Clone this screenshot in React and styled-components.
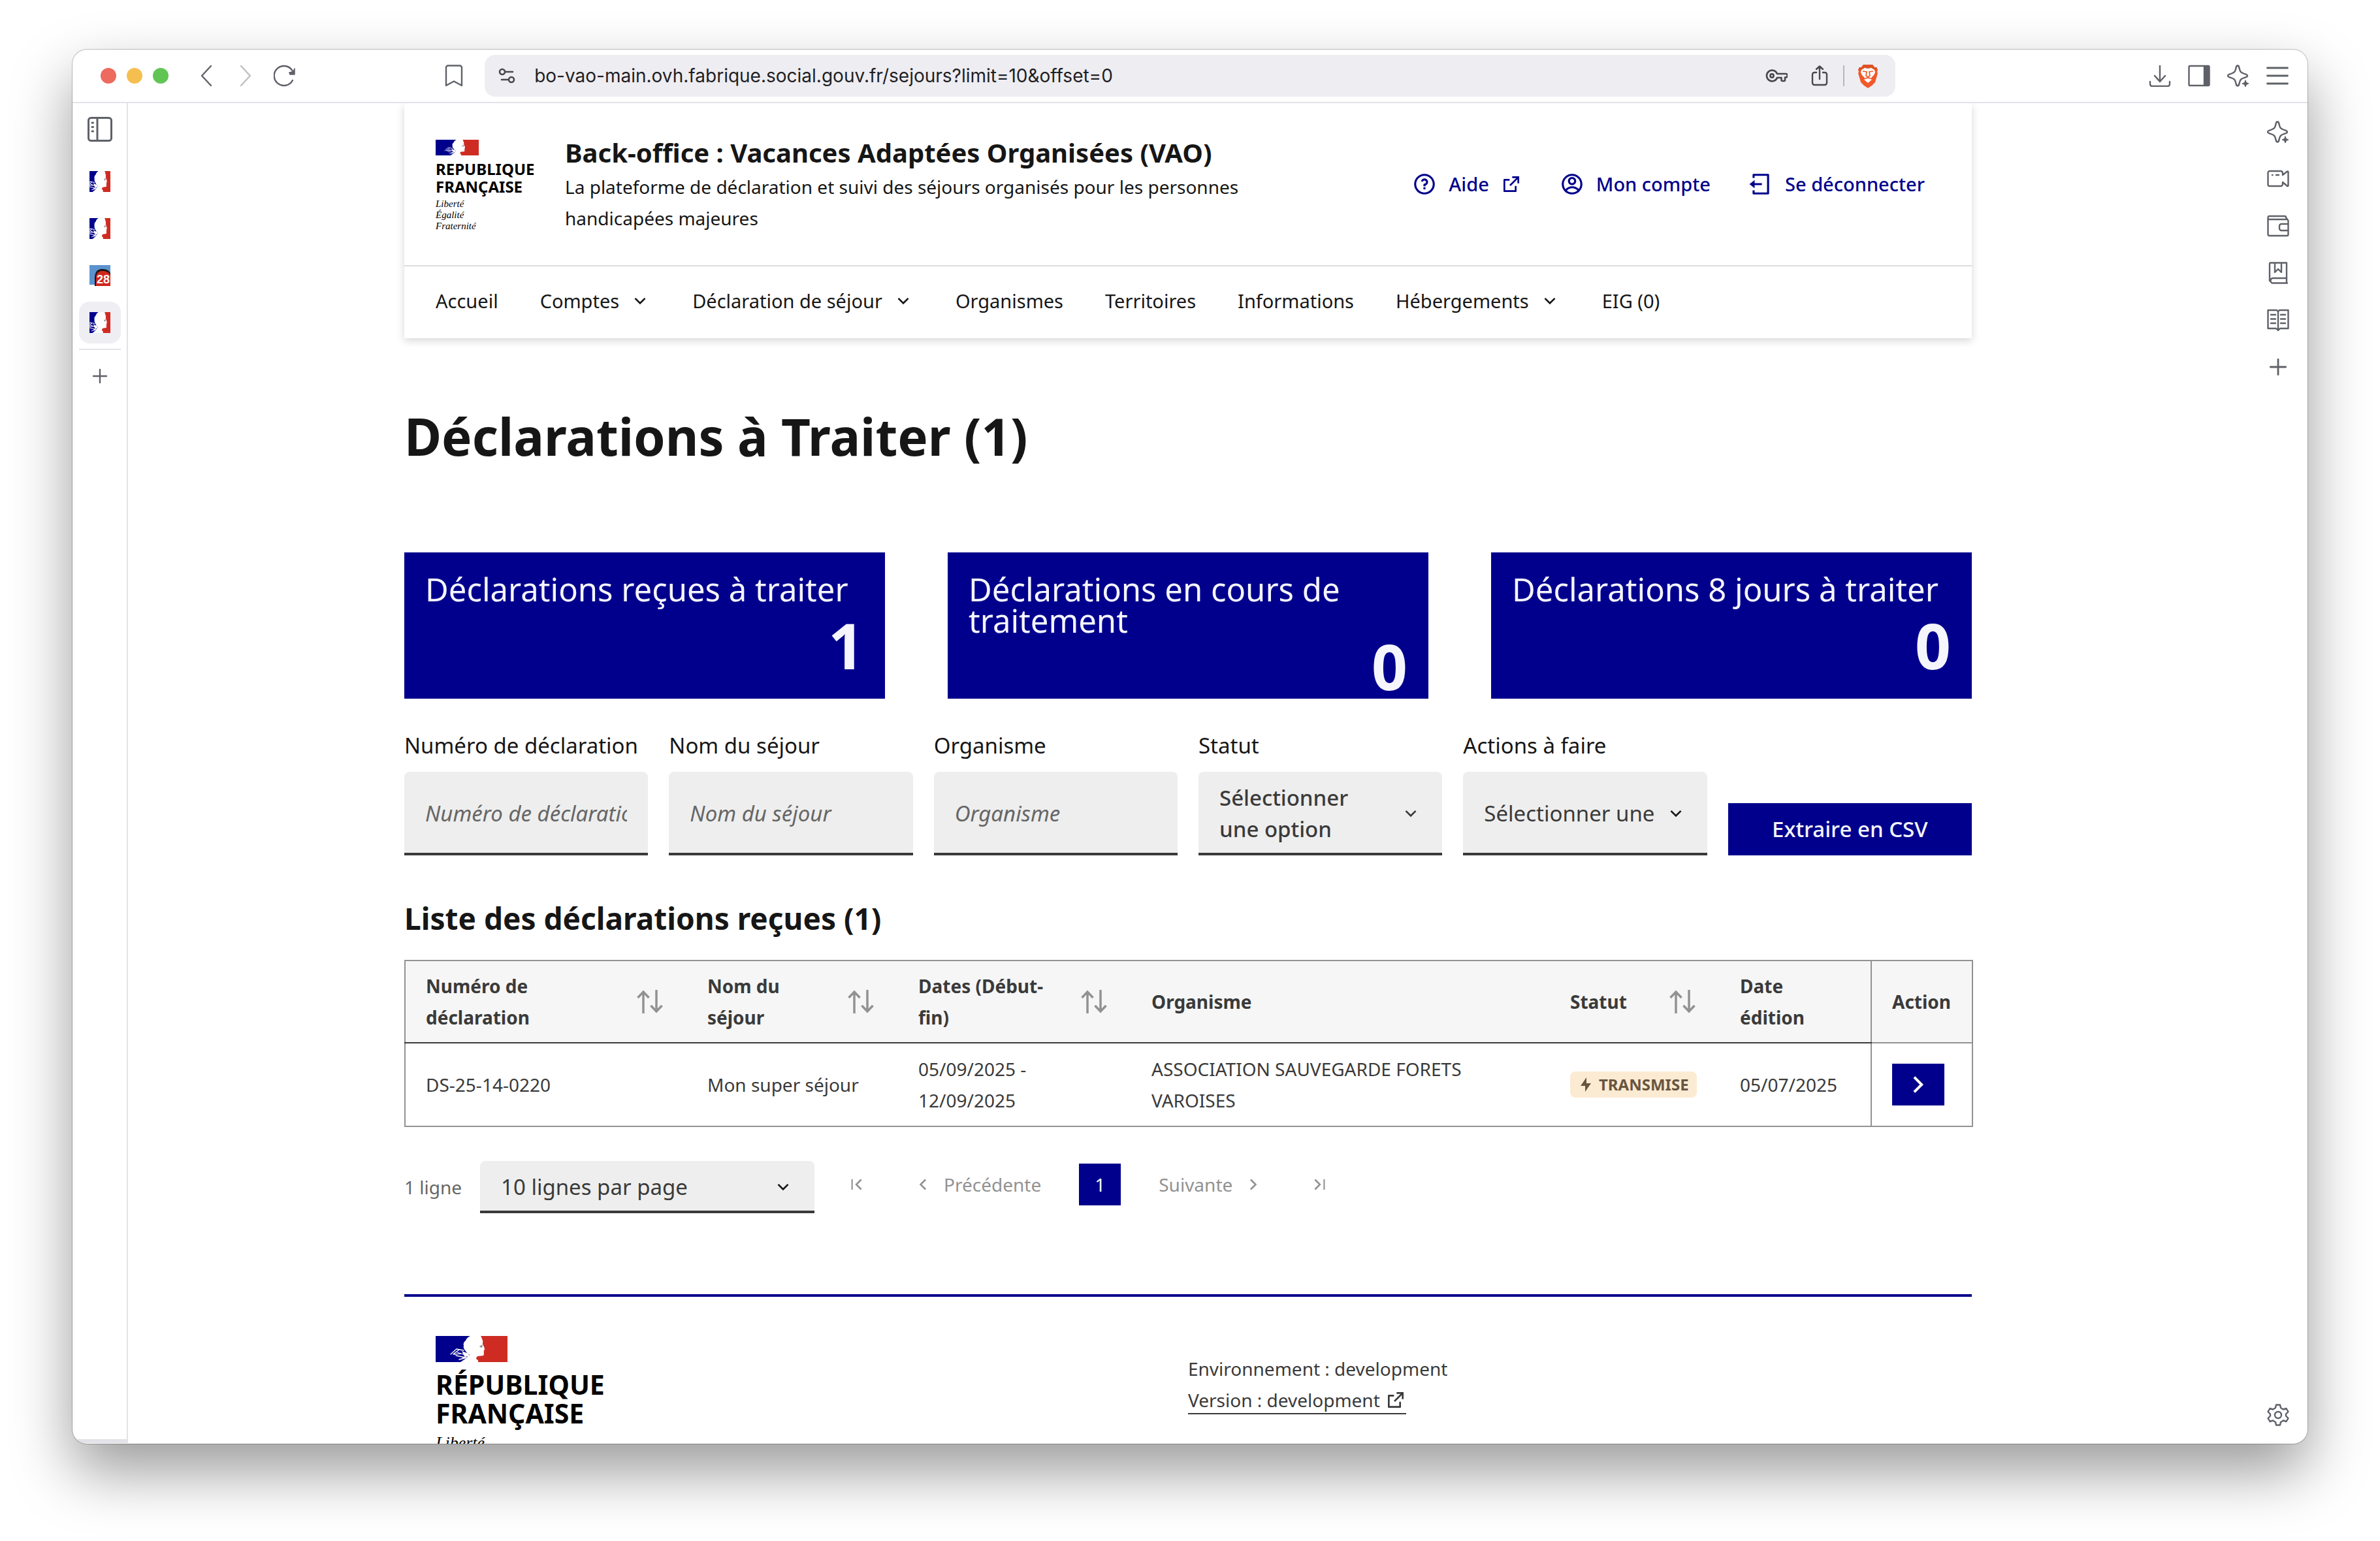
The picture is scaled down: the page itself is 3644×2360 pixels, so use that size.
import React from "react";
import styled, { createGlobalStyle, css } from "styled-components";
import {
  RiAccountCircleLine,
  RiArrowDownSLine,
  RiArrowLeftSLine,
  RiArrowRightSLine,
  RiExternalLinkLine,
  RiFlashlightFill,
  RiLogoutBoxLine,
  RiQuestionLine,
} from "react-icons/ri";

const BLUE = "#00008c";
const RED = "#ce2c23";
const TITLE = "#161616";
const TEXT = "#3a3a3a";
const MENTION = "#666666";
const DISABLED = "#929292";
const CHROME = "#5f6168";
const CHROME_LINE = "#e2e2e8";

const GlobalStyle = createGlobalStyle`
  *, *::before, *::after { box-sizing: border-box; }
  html, body, #root { height: 100%; }
  body {
    margin: 0;
    background: #ffffff;
    color: ${TEXT};
    font-family: "Noto Sans", "Open Sans", sans-serif;
    font-size: 28px;
    line-height: 48px;
  }
  button, input, select { font: inherit; color: inherit; margin: 0; }
  button { border: 0; padding: 0; background: none; cursor: pointer; }
  a { color: inherit; text-decoration: none; }
  h1, h2, p, ul { margin: 0; padding: 0; }
  ul { list-style: none; }
  svg { display: block; flex: none; }
`;

/* ---------- Browser window ---------- */

const Desktop = styled.div`
  height: 100%;
  min-height: 900px;
  padding: 76px 111px 149px;
  display: flex;
`;

const BrowserWindow = styled.div`
  flex: 1;
  min-width: 0;
  display: flex;
  flex-direction: column;
  overflow: hidden;
  border-radius: 22px;
  background: #ffffff;
  box-shadow: 0 0 0 1px rgba(0, 0, 0, 0.22), 0 42px 92px rgba(0, 0, 0, 0.4);
`;

const Toolbar = styled.div`
  flex: none;
  height: 82px;
  padding: 0 26px 0 43px;
  display: grid;
  grid-template-columns: 13fr 2224px 15fr;
  align-items: center;
  border-bottom: 2px solid ${CHROME_LINE};
  color: ${CHROME};

  @media (max-width: 3200px) {
    grid-template-columns: auto 1fr auto;
    gap: 32px;
  }
`;

const ToolbarGroup = styled.div`
  display: flex;
  align-items: center;
  gap: ${(p) => p.$gap}px;
  justify-content: ${(p) => (p.$end ? "flex-end" : "flex-start")};
`;

const Lights = styled.div`
  display: flex;
  gap: 16px;
  margin-right: 18px;
`;

const Light = styled.span`
  width: 24px;
  height: 24px;
  border-radius: 50%;
  background: ${(p) => p.$color};
`;

const ChromeButton = styled.button`
  width: ${(p) => p.$width || 40}px;
  height: 40px;
  display: flex;
  align-items: center;
  justify-content: center;
  opacity: ${(p) => (p.$faded ? 0.4 : 1)};
`;

const AddressRow = styled.div`
  display: flex;
  align-items: center;
  gap: 30px;
`;

const AddressBar = styled.div`
  flex: 1;
  height: 64px;
  padding: 0 22px 0 14px;
  display: flex;
  align-items: center;
  gap: 16px;
  border-radius: 16px;
  background: #eeedf2;
  color: #47474d;
`;

const AddressInput = styled.input`
  flex: 1;
  min-width: 0;
  border: 0;
  padding: 0 0 0 6px;
  background: transparent;
  color: #1f1f24;
  font-family: Inter, "Liberation Sans", sans-serif;
  font-size: 28px;
  line-height: 40px;
`;

const AddressSeparator = styled.span`
  width: 2px;
  height: 32px;
  background: #b6b5bc;
`;

const WindowBody = styled.div`
  flex: 1;
  min-height: 0;
  display: flex;
`;

const TabRail = styled.div`
  flex: none;
  width: 85px;
  margin-bottom: 1px;
  padding-top: 16px;
  display: flex;
  flex-direction: column;
  align-items: center;
  border-right: 2px solid ${CHROME_LINE};
  border-bottom: 6px solid ${CHROME_LINE};
  color: ${CHROME};
`;

const TabButton = styled.button`
  width: 64px;
  height: 64px;
  margin-bottom: 8px;
  display: flex;
  align-items: center;
  justify-content: center;
  border-radius: 16px;
  background: ${(p) => (p.$active ? "#efeef3" : "transparent")};
`;

const RailToggle = styled(TabButton)`
  height: 48px;
  margin-bottom: 24px;
`;

const RailDivider = styled.hr`
  width: 64px;
  height: 2px;
  margin: 0 0 8px;
  border: 0;
  background: ${CHROME_LINE};
`;

const ToolRail = styled.div`
  flex: none;
  width: 91px;
  padding: 8px 0 8px;
  display: flex;
  flex-direction: column;
  align-items: center;
  color: ${CHROME};
`;

const RailButton = styled.button`
  width: 72px;
  height: 72px;
  display: flex;
  align-items: center;
  justify-content: center;

  &:last-child {
    margin-top: auto;
  }
`;

/* ---------- Page ---------- */

const Viewport = styled.main`
  flex: 1;
  min-width: 0;
  overflow: hidden;
`;

const Page = styled.div`
  max-width: 2400px;
  margin: 0 auto;
`;

const Header = styled.header`
  background: #ffffff;
  box-shadow: 0 4px 12px rgba(0, 0, 0, 0.16);
  color: ${TITLE};
`;

const HeaderBody = styled.div`
  min-height: 248px;
  padding: 40px 72px 40px 48px;
  display: flex;
  align-items: center;
`;

const Brand = styled.div`
  flex: none;
  width: 198px;
  padding-top: 4px;
`;

const Flag = styled.svg`
  width: ${(p) => p.$width}px;
  height: ${(p) => p.$height}px;
`;

const BrandName = styled.p`
  margin-top: ${(p) => (p.$large ? 12 : 7)}px;
  color: #000000;
  font-size: ${(p) => (p.$large ? 41 : 24)}px;
  line-height: ${(p) => (p.$large ? 44 : 27)}px;
  font-weight: 700;
`;

const BrandMotto = styled.p`
  margin-top: ${(p) => (p.$large ? 10 : 5)}px;
  color: #000000;
  font-family: "Liberation Serif", serif;
  font-style: italic;
  font-size: ${(p) => (p.$large ? 26 : 15)}px;
  line-height: ${(p) => (p.$large ? 28 : 17)}px;
`;

const Service = styled.div`
  flex: 0 1 1120px;
`;

const ServiceTitle = styled.p`
  font-size: 40px;
  line-height: 56px;
  font-weight: 700;
`;

const QuickLinks = styled.ul`
  margin-left: auto;
  display: flex;
  align-items: center;
  gap: 58px;
`;

const QuickLink = styled.a`
  display: flex;
  align-items: center;
  gap: 18px;
  color: ${BLUE};
  font-size: 29px;
  font-weight: 500;
  white-space: nowrap;
`;

const Nav = styled.nav`
  border-top: 2px solid #dddddd;
`;

const NavList = styled.ul`
  padding: 0 16px;
  display: flex;
`;

const navItem = css`
  height: 110px;
  padding: 0 32px 4px;
  display: flex;
  align-items: center;
  gap: 16px;
  font-size: 29px;
  white-space: nowrap;
`;

const NavLink = styled.a`
  ${navItem}
`;

const NavButton = styled.button`
  ${navItem}
`;

const PageTitle = styled.h1`
  margin: 102px 0 130px;
  color: ${TITLE};
  font-size: 78px;
  line-height: 96px;
  font-weight: 700;
`;

const Tiles = styled.div`
  display: grid;
  grid-template-columns: repeat(3, 1fr);
  gap: 96px;
`;

const Tile = styled.button`
  height: 224px;
  padding: 32px;
  display: flex;
  flex-direction: column;
  background: ${BLUE};
  color: #f5f5fe;
  text-align: left;
`;

const TileLabel = styled.span`
  flex: none;
  min-height: 64px;
  margin-bottom: -18px;
  font-size: 49px;
  line-height: 48px;
  font-weight: 400;
`;

const TileCount = styled.span`
  flex: none;
  align-self: flex-end;
  font-size: 96px;
  line-height: 128px;
  font-weight: 700;
`;

const Filters = styled.form`
  margin-top: 48px;
  display: grid;
  grid-template-columns: repeat(6, minmax(0, 1fr));
  gap: 32px;
  align-items: end;
`;

const Field = styled.div`
  display: grid;
  grid-template-columns: minmax(0, 1fr);
  gap: 16px;
`;

const Label = styled.label`
  color: ${TITLE};
  font-size: 33px;
  line-height: 48px;
  white-space: nowrap;
`;

const control = css`
  width: 100%;
  border: 0;
  border-bottom: 4px solid ${TEXT};
  border-radius: 8px 8px 0 0;
  background: #eeeeee;
  color: ${TEXT};
  font-size: 33px;
  line-height: 48px;
`;

const TextInput = styled.input`
  ${control}
  height: 128px;
  padding: 2px 32px 0;

  &::placeholder {
    color: ${MENTION};
    font-style: italic;
    opacity: 1;
  }
`;

const ListButton = styled.button`
  ${control}
  min-height: 128px;
  padding: 16px 32px 12px;
  display: flex;
  align-items: center;
  justify-content: space-between;
  gap: 64px;
  font-weight: 500;
  text-align: left;
`;

const SelectBox = styled.div`
  display: grid;
  grid-template-columns: minmax(0, 1fr);
  align-items: center;
  color: ${TITLE};

  > * {
    grid-area: 1 / 1;
  }

  > svg {
    justify-self: end;
    margin-right: 32px;
    pointer-events: none;
  }
`;

const Select = styled.select`
  ${control}
  appearance: none;
  height: ${(p) => (p.$tall ? 128 : 80)}px;
  padding: 4px 80px 0 32px;
`;

const ExportButton = styled.button`
  height: 80px;
  background: ${BLUE};
  color: #f5f5fe;
  font-size: 33px;
  font-weight: 500;
`;

const ListTitle = styled.h2`
  margin: 64px 0 32px;
  color: ${TITLE};
  font-size: 46px;
  line-height: 64px;
  font-weight: 700;
`;

const Table = styled.table`
  width: 100%;
  table-layout: fixed;
  border-collapse: collapse;
  border: 2px solid ${DISABLED};
`;

const HeadCell = styled.th`
  height: 126px;
  padding: 0 32px 0 31px;
  border-bottom: 2px solid ${(p) => (p.$action ? DISABLED : TEXT)};
  border-left: ${(p) => (p.$action ? `2px solid ${DISABLED}` : "0")};
  background: #f6f6f6;
  font-weight: 700;
  text-align: left;
  white-space: pre-line;
`;

const HeadContent = styled.div`
  display: flex;
  align-items: center;
  justify-content: space-between;
`;

const SortButton = styled.button`
  color: ${DISABLED};
`;

const Cell = styled.td`
  height: 128px;
  padding: 0 32px 0 31px;
  border-left: ${(p) => (p.$action ? `2px solid ${DISABLED}` : "0")};
`;

const Badge = styled.span`
  width: max-content;
  height: 40px;
  padding: 0 12px;
  display: flex;
  align-items: center;
  gap: 8px;
  border-radius: 8px;
  background: #fcebd3;
  color: #685540;
  font-size: 24px;
  line-height: 40px;
  font-weight: 700;
  text-transform: uppercase;
`;

const RowAction = styled.a`
  width: 80px;
  height: 64px;
  display: flex;
  align-items: center;
  justify-content: center;
  background: ${BLUE};
  color: #ffffff;
`;

const TableFooter = styled.div`
  margin-top: 52px;
  display: flex;
  align-items: center;
  gap: 28px;
`;

const PageSize = styled.div`
  width: 512px;
`;

const RowCount = styled.span`
  color: ${MENTION};
`;

const Pagination = styled.ul`
  padding: 0 0 8px 4px;
  display: flex;
  align-items: center;
  gap: 30px;
`;

const PageLink = styled.button`
  min-width: 64px;
  height: 64px;
  padding: 0 ${(p) => (p.$icon ? 16 : p.$current ? 0 : 24)}px;
  margin: 0 ${(p) => (p.$current ? 4 : 0)}px;
  display: flex;
  align-items: center;
  justify-content: center;
  gap: 16px;
  background: ${(p) => (p.$current ? BLUE : "transparent")};
  color: ${(p) => (p.$current ? "#f5f5fe" : DISABLED)};
`;

const Footer = styled.footer`
  margin-top: 124px;
  padding: 60px 48px 64px;
  display: grid;
  grid-template-columns: 1fr 1fr;
  border-top: 4px solid ${BLUE};
`;

const FooterInfo = styled.div`
  padding-top: 26px;
`;

const VersionLink = styled.a`
  display: inline-flex;
  align-items: center;
  gap: 8px;
  height: 42px;
  border-bottom: 2px solid ${TEXT};
`;

/* ---------- Drawings ---------- */

const Marianne = ({ width, height, viewBox = "0 0 110 40" }) => (
  <Flag $width={width} $height={height} viewBox={viewBox} preserveAspectRatio="none" aria-hidden="true">
    <rect width="110" height="40" fill="#ffffff" />
    <path d="M0 0H53C49 2 47 4 46 7C43 9 42 12 43 15C42 18 44 20 45 22L48 26L52 29L47 34L38 40H0Z" fill={BLUE} />
    <path d="M110 0H69C70 2 71 3 71 5C73 7 72 9 72 12C73 15 75 18 75 20C75 22 73 22 74 24C73 26 75 28 73 30C69 31 65 30 63 32C61 35 63 36 65 37V40H110Z" fill={RED} />
    <path d="M23 28L32 20L43 22M28 27L36 21M27 28L39 27M33 25L48 30M31 30L46 33M36 36L48 33M41 34L50 29" fill="none" stroke="#ffffff" strokeWidth="1.3" strokeLinecap="round" />
    <path d="M40 23L50 27L52 32L44 31Z" fill="#ffffff" />
    <path d="M67 16L72 13L71 18L68 17Z" fill="#8d8d8d" />
  </Flag>
);

const Line = ({ width = 34, height = 34, box = "0 0 34 34", stroke = 2.4, children }) => (
  <svg width={width} height={height} viewBox={box} fill="none" stroke="currentColor" strokeWidth={stroke} strokeLinecap="round" strokeLinejoin="round" aria-hidden="true">
    {children}
  </svg>
);

const BackIcon = () => <Line><path d="M24 2L10 17L24 32" /></Line>;
const ForwardIcon = () => <Line><path d="M10 2L24 17L10 32" /></Line>;
const ReloadIcon = () => (
  <Line>
    <path d="M29 24A15 15 0 1 1 29 10" />
    <path d="M32 6V15H25L24 12L30 11Z" fill="currentColor" strokeWidth="1.500" />
  </Line>
);
const BookmarkIcon = () => (
  <Line><path d="M8 1.5H26A3 3 0 0 1 29 4.500V32L17 25.500L5 32V4.500A3 3 0 0 1 8 1.500Z" /></Line>
);
const SiteSettingsIcon = () => (
  <Line width={26} height={26} box="0 0 26 26" stroke={2.6}>
    <circle cx="6" cy="7" r="4" />
    <path d="M11 7H22M5 19H14" />
    <circle cx="20" cy="19" r="4" />
  </Line>
);
const KeyIcon = () => (
  <Line width={34} height={22} box="0 0 34 22" stroke={2.6}>
    <circle cx="10" cy="11" r="2.600" />
    <path d="M18 8H31A1.500 1.500 0 0 1 31 13.500H30V17.500A1.500 1.500 0 0 1 28.500 19H26A1.500 1.500 0 0 1 24.500 17.500V14H18A8.300 8.300 0 1 1 18 8Z" />
  </Line>
);
const ShareIcon = () => (
  <Line width={26} height={34} box="0 0 26 34">
    <path d="M8 12H5A3 3 0 0 0 2 15V28A3 3 0 0 0 5 31H21A3 3 0 0 0 24 28V15A3 3 0 0 0 21 12H18M13 22V3M8 7L13 2.500L18 7" />
  </Line>
);
const BraveIcon = () => (
  <svg width="32" height="37" viewBox="0 0 32 37" aria-hidden="true">
    <path d="M9 1H23L26 5L29 5L31 9L30 12L31 14L27 28L22 33L16 37L10 33L5 28L1 14L2 12L1 9L3 5L6 5Z" fill="#f1592a" />
    <path d="M9 1H23L26 5L29 5L31 9H1L3 5L6 5Z" fill="#dd5226" />
    <path d="M11 6L16 7L21 6L26 9L27 13L25 17L21 21L22 24L16 29L10 24L11 21L7 17L5 13L6 9Z" fill="#ffffff" />
    <path d="M8 11L14 12L13 18L16 20L19 18L18 12L24 11M10 23L16 21L22 23" fill="none" stroke="#f1592a" strokeWidth="1.700" />
  </svg>
);
const DownloadIcon = () => (
  <Line><path d="M17 2V26M9 17L17 26L25 17M2 26V30A3 3 0 0 0 5 33H29A3 3 0 0 0 32 30V26" /></Line>
);
const PanelIcon = () => (
  <Line>
    <rect x="1.500" y="2" width="31" height="30" rx="1.500" />
    <path d="M25 3H32V31H25Z" fill="currentColor" />
  </Line>
);
const SparkleIcon = () => (
  <Line>
    <path d="M16 1.500C18 1.500 18 3 19 7C20 11 21 12 25 13.500C29 15 31 15 31 17C31 19 29 19 25 20.500C21 22 20 23 19 27C18 31 18 32.500 16 32.500C14 32.500 14 31 13 27C12 23 11 22 7 20.500C3 19 1 19 1 17C1 15 3 15 7 13.500C11 12 12 11 13 7C14 3 14 1.500 16 1.500Z" />
    <path d="M28 24L29.500 27.500L33 29L29.500 30.500L28 34L26.500 30.500L23 29L26.500 27.500Z" fill="currentColor" strokeWidth="1" />
  </Line>
);
const MenuIcon = () => <Line stroke={2.8}><path d="M1.500 5H32.500M1.500 17H32.500M1.500 29H32.500" /></Line>;
const SidebarIcon = () => (
  <Line width={40} height={40} box="0 0 40 40" stroke={3}>
    <rect x="2.500" y="2.500" width="35" height="35" rx="4" />
    <path d="M16 3V37M8 10H9.500M8 16.500H9.500M8 23H9.500" />
  </Line>
);
const PlusIcon = ({ size = 24 }) => (
  <Line width={size} height={size} box="0 0 24 24" stroke={2.4}><path d="M12 2V22M2 12H22" /></Line>
);
const VideoIcon = () => (
  <Line>
    <path d="M4 5H21A3 3 0 0 1 24 8V11L31 5.500A1 1 0 0 1 32.500 6.500V27A1 1 0 0 1 31 28L24 22V25A3 3 0 0 1 21 28H4A2.500 2.500 0 0 1 1.500 25.500V7.500A2.500 2.500 0 0 1 4 5ZM8 11H8.500M14 11H18" />
  </Line>
);
const WalletIcon = () => (
  <Line>
    <path d="M1.500 4A2 2 0 0 1 3.500 2H27A2 2 0 0 1 29 4L32.500 9V30A2 2 0 0 1 30.500 32H3.500A2 2 0 0 1 1.500 30ZM2 7H29M32 14H22A3 3 0 0 0 19 17V21A3 3 0 0 0 22 24H32" />
  </Line>
);
const BookIcon = () => (
  <Line>
    <path d="M5 1.500H30V25H8A4 4 0 0 0 8 32.500H31M30 25V32M4 29V3A1.500 1.500 0 0 1 5.500 1.500M12 2V16L17 11L22 16V2" />
  </Line>
);
const ReaderIcon = () => (
  <Line>
    <path d="M1.500 2H14A3 3 0 0 1 17 5A3 3 0 0 1 20 2H32.500V30H20L17 33L14 30H1.500ZM17 5V32M6 9H13M6 15.500H13M6 22H13M21 9H28M21 15.500H28M21 22H28" />
  </Line>
);
const GearIcon = () => (
  <Line>
    <path d="M14 1.500H20L21 6L25 8.500L29.500 7L32.500 12L29 15.500V18.500L32.500 22L29.500 27L25 25.500L21 28L20 32.500H14L13 28L9 25.500L4.500 27L1.500 22L5 18.500V15.500L1.500 12L4.500 7L9 8.500L13 6Z" />
    <circle cx="17" cy="17" r="5" />
  </Line>
);
const CalendarFavicon = () => (
  <svg width="32" height="32" viewBox="0 0 32 32" aria-hidden="true">
    <rect width="32" height="30" fill="#5b93cf" />
    <path d="M8 32V18C9 8 14 6 20 6C27 6 31 9 32 13V32Z" fill="#1c1614" />
    <path d="M10 32V18C11 11 15 9 20 9C26 9 30 11 32 16V32Z" fill="#d0261d" />
    <text x="11" y="28" fill="#ffffff" fontFamily="Liberation Sans, sans-serif" fontWeight="700" fontSize="18">28</text>
  </svg>
);
const SortIcon = () => (
  <svg width="48" height="48" viewBox="0 0 48 48" fill="none" stroke="currentColor" strokeWidth="3.500" aria-hidden="true">
    <path d="M13 42V9M4.500 18L13 9L21.500 18M33 6V39M24.500 30L33 39L41.500 30" />
  </svg>
);
const EdgeIcon = ({ last }) => (
  <svg width="32" height="32" viewBox="0 0 24 24" fill="currentColor" aria-hidden="true">
    {last ? (
      <path d="M10.500 12L5.600 7.100L7 5.700L13.300 12L7 18.300L5.600 16.900ZM16 6H17.600V18H16Z" />
    ) : (
      <path d="M13.500 12L18.400 7.100L17 5.700L10.700 12L17 18.300L18.400 16.900ZM6.400 6H8V18H6.400Z" />
    )}
  </svg>
);

/* ---------- Data ---------- */

const NAV = [
  { label: "Accueil" },
  { label: "Comptes", menu: true },
  { label: "Déclaration de séjour", menu: true },
  { label: "Organismes" },
  { label: "Territoires" },
  { label: "Informations" },
  { label: "Hébergements", menu: true },
  { label: "EIG (0)" },
];

const TILES = [
  { label: "Déclarations reçues à traiter", count: 1 },
  { label: "Déclarations en cours de traitement", count: 0 },
  { label: "Déclarations 8 jours à traiter", count: 0 },
];

const TEXT_FILTERS = [
  { id: "numero", label: "Numéro de déclaration" },
  { id: "nom", label: "Nom du séjour" },
  { id: "organisme", label: "Organisme" },
];

const COLUMNS = [
  { label: "Numéro de\ndéclaration", width: 432, sort: true },
  { label: "Nom du\nséjour", width: 323, sort: true },
  { label: "Dates (Début-\nfin)", width: 357, sort: true },
  { label: "Organisme", width: 641 },
  { label: "Statut", width: 260, sort: true },
  { label: "Date\nédition", width: 232 },
  { label: "Action", width: 155, action: true },
];

const TOOLS = [
  ["Leo", SparkleIcon],
  ["Talk", VideoIcon],
  ["Portefeuille", WalletIcon],
  ["Favoris", BookIcon],
  ["Liste de lecture", ReaderIcon],
];

const Favicon = () => <Marianne width={32} height={32} viewBox="30 0 54 40" />;

export default function App() {
  return (
    <Desktop>
      <GlobalStyle />
      <BrowserWindow>
        <Toolbar>
          <ToolbarGroup $gap={20}>
            <Lights>
              <Light $color="#ed6a5e" />
              <Light $color="#f5bf4f" />
              <Light $color="#61c554" />
            </Lights>
            <ChromeButton aria-label="Précédent"><BackIcon /></ChromeButton>
            <ChromeButton aria-label="Suivant" $faded><ForwardIcon /></ChromeButton>
            <ChromeButton aria-label="Recharger"><ReloadIcon /></ChromeButton>
          </ToolbarGroup>
          <AddressRow>
            <ChromeButton aria-label="Ajouter aux favoris" $width={34}><BookmarkIcon /></ChromeButton>
            <AddressBar>
              <ChromeButton aria-label="Informations sur le site"><SiteSettingsIcon /></ChromeButton>
              <AddressInput
                aria-label="Adresse"
                defaultValue="bo-vao-main.ovh.fabrique.social.gouv.fr/sejours?limit=10&offset=0"
              />
              <ChromeButton aria-label="Mots de passe" $width={60}><KeyIcon /></ChromeButton>
              <ChromeButton aria-label="Partager"><ShareIcon /></ChromeButton>
              <AddressSeparator />
              <ChromeButton aria-label="Boucliers Brave"><BraveIcon /></ChromeButton>
            </AddressBar>
          </AddressRow>
          <ToolbarGroup $gap={20} $end>
            <ChromeButton aria-label="Téléchargements"><DownloadIcon /></ChromeButton>
            <ChromeButton aria-label="Panneau latéral"><PanelIcon /></ChromeButton>
            <ChromeButton aria-label="Assistant"><SparkleIcon /></ChromeButton>
            <ChromeButton aria-label="Menu"><MenuIcon /></ChromeButton>
          </ToolbarGroup>
        </Toolbar>

        <WindowBody>
          <TabRail>
            <RailToggle aria-label="Afficher les onglets"><SidebarIcon /></RailToggle>
            <TabButton aria-label="Onglet 1"><Favicon /></TabButton>
            <TabButton aria-label="Onglet 2"><Favicon /></TabButton>
            <TabButton aria-label="Onglet 3"><CalendarFavicon /></TabButton>
            <TabButton aria-label="Onglet 4" $active><Favicon /></TabButton>
            <RailDivider />
            <TabButton aria-label="Nouvel onglet"><PlusIcon /></TabButton>
          </TabRail>

          <Viewport>
            <Page>
              <Header>
                <HeaderBody>
                  <Brand>
                    <Marianne width={66} height={24} />
                    <BrandName>REPUBLIQUE<br />FRANÇAISE</BrandName>
                    <BrandMotto>Liberté<br />Égalité<br />Fraternité</BrandMotto>
                  </Brand>
                  <Service>
                    <ServiceTitle>Back-office : Vacances Adaptées Organisées (VAO)</ServiceTitle>
                    <p>La plateforme de déclaration et suivi des séjours organisés pour les personnes handicapées majeures</p>
                  </Service>
                  <QuickLinks>
                    <li>
                      <QuickLink href="#aide">
                        <RiQuestionLine size={38} />Aide<RiExternalLinkLine size={32} />
                      </QuickLink>
                    </li>
                    <li><QuickLink href="#compte"><RiAccountCircleLine size={38} />Mon compte</QuickLink></li>
                    <li><QuickLink href="#deconnexion"><RiLogoutBoxLine size={38} />Se déconnecter</QuickLink></li>
                  </QuickLinks>
                </HeaderBody>
                <Nav aria-label="Menu principal">
                  <NavList>
                    {NAV.map(({ label, menu }) => (
                      <li key={label}>
                        {menu ? (
                          <NavButton type="button">{label}<RiArrowDownSLine size={32} /></NavButton>
                        ) : (
                          <NavLink href="#nav">{label}</NavLink>
                        )}
                      </li>
                    ))}
                  </NavList>
                </Nav>
              </Header>

              <PageTitle>Déclarations à Traiter (1)</PageTitle>

              <Tiles>
                {TILES.map(({ label, count }) => (
                  <Tile key={label} type="button">
                    <TileLabel>{label}</TileLabel>
                    <TileCount>{count}</TileCount>
                  </Tile>
                ))}
              </Tiles>

              <Filters onSubmit={(e) => e.preventDefault()}>
                {TEXT_FILTERS.map(({ id, label }) => (
                  <Field key={id}>
                    <Label htmlFor={id}>{label}</Label>
                    <TextInput id={id} type="text" placeholder={label} />
                  </Field>
                ))}
                <Field>
                  <Label htmlFor="statut">Statut</Label>
                  <ListButton id="statut" type="button" aria-haspopup="listbox">
                    Sélectionner une option
                    <RiArrowDownSLine size={32} />
                  </ListButton>
                </Field>
                <Field>
                  <Label htmlFor="actions">Actions à faire</Label>
                  <SelectBox>
                    <Select id="actions" $tall defaultValue="">
                      <option value="">Sélectionner une option</option>
                    </Select>
                    <RiArrowDownSLine size={32} />
                  </SelectBox>
                </Field>
                <ExportButton type="button">Extraire en CSV</ExportButton>
              </Filters>

              <ListTitle>Liste des déclarations reçues (1)</ListTitle>

              <Table>
                <colgroup>
                  {COLUMNS.map(({ label, width }) => <col key={label} width={width} />)}
                </colgroup>
                <thead>
                  <tr>
                    {COLUMNS.map(({ label, sort, action }) => (
                      <HeadCell key={label} $action={action} scope="col">
                        <HeadContent>
                          {label}
                          {sort && <SortButton type="button" aria-label="Trier"><SortIcon /></SortButton>}
                        </HeadContent>
                      </HeadCell>
                    ))}
                  </tr>
                </thead>
                <tbody>
                  <tr>
                    <Cell>DS-25-14-0220</Cell>
                    <Cell>Mon super séjour</Cell>
                    <Cell>05/09/2025 - 12/09/2025</Cell>
                    <Cell>ASSOCIATION SAUVEGARDE FORETS VAROISES</Cell>
                    <Cell><Badge><RiFlashlightFill size={24} />Transmise</Badge></Cell>
                    <Cell>05/07/2025</Cell>
                    <Cell $action>
                      <RowAction href="#sejour" aria-label="Voir la déclaration"><RiArrowRightSLine size={48} /></RowAction>
                    </Cell>
                  </tr>
                </tbody>
              </Table>

              <TableFooter>
                <RowCount>1 ligne</RowCount>
                <PageSize>
                  <SelectBox>
                    <Select aria-label="Lignes par page" defaultValue="10">
                      <option value="10">10 lignes par page</option>
                    </Select>
                    <RiArrowDownSLine size={32} />
                  </SelectBox>
                </PageSize>
                <Pagination aria-label="Pagination">
                  <li><PageLink $icon aria-label="Première page"><EdgeIcon /></PageLink></li>
                  <li><PageLink><RiArrowLeftSLine size={32} />Précédente</PageLink></li>
                  <li><PageLink $current aria-current="page">1</PageLink></li>
                  <li><PageLink>Suivante<RiArrowRightSLine size={32} /></PageLink></li>
                  <li><PageLink $icon aria-label="Dernière page"><EdgeIcon last /></PageLink></li>
                </Pagination>
              </TableFooter>

              <Footer>
                <div>
                  <Marianne width={110} height={40} />
                  <BrandName $large>RÉPUBLIQUE<br />FRANÇAISE</BrandName>
                  <BrandMotto $large>Liberté</BrandMotto>
                </div>
                <FooterInfo>
                  <p>Environnement : development</p>
                  <VersionLink href="#version">Version : development<RiExternalLinkLine size={32} /></VersionLink>
                </FooterInfo>
              </Footer>
            </Page>
          </Viewport>

          <ToolRail>
            {TOOLS.map(([label, Icon]) => (
              <RailButton key={label} aria-label={label}><Icon /></RailButton>
            ))}
            <RailButton aria-label="Ajouter"><PlusIcon size={28} /></RailButton>
            <RailButton aria-label="Paramètres"><GearIcon /></RailButton>
          </ToolRail>
        </WindowBody>
      </BrowserWindow>
    </Desktop>
  );
}
